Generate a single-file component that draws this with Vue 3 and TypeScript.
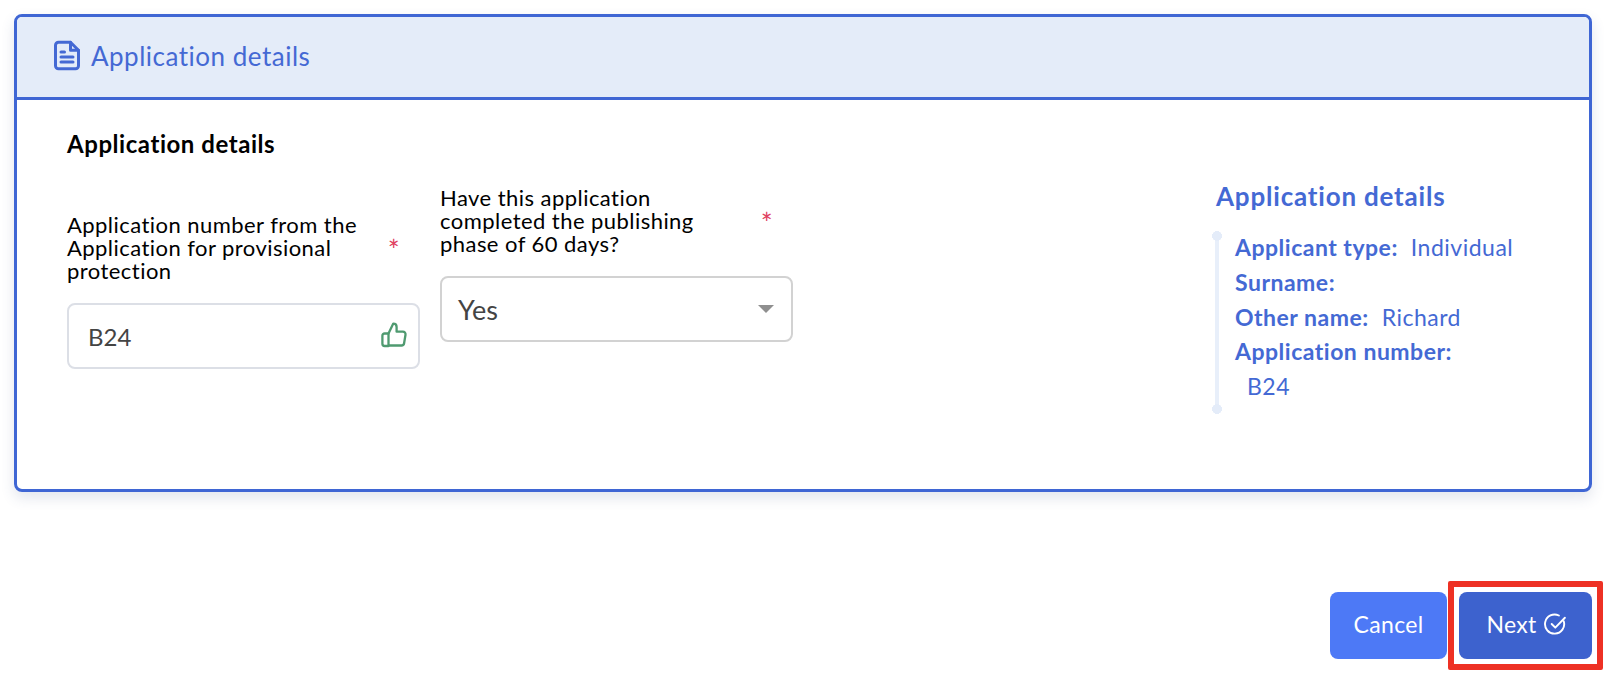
<template>
  <div class="page">
    <section class="card">
      <header class="card-head">
        <svg class="doc-icon" viewBox="0 0 26 30" fill="none" stroke="currentColor" stroke-width="3" stroke-linejoin="round" stroke-linecap="round">
          <path d="M16.5 1.8H4.5a3 3 0 0 0-3 3v20.4a3 3 0 0 0 3 3h17a3 3 0 0 0 3-3V9.8z" />
          <path d="M16.5 1.8v8h8" />
          <path d="M7 11.5h3.5M7 16.5h12M7 21.5h12" />
        </svg>
        <span>Application details</span>
      </header>

      <div class="card-body">
        <div class="form-side">
          <h3 class="form-title">Application details</h3>
          <div class="fields">
            <div class="field field-low">
              <label class="field-label">
                <span class="label-text">Application number from the Application for provisional protection</span>
                <span class="req">*</span>
              </label>
              <div class="control">
                <span class="value-input">B24</span>
                <svg class="thumb" viewBox="0 0 26 26" fill="none" stroke="currentColor" stroke-width="2.3" stroke-linejoin="round" stroke-linecap="round">
                  <path d="M7.5 11.5 12.3 1.6c1.9 0 3.3 1.4 3.3 3.3v4.8h6.3a2.6 2.6 0 0 1 2.6 3l-1.4 8.6a2.6 2.6 0 0 1-2.6 2.2H7.5z" />
                  <path d="M7.5 11.5H3.6a2.2 2.2 0 0 0-2.2 2.2v8.1a2.2 2.2 0 0 0 2.2 2.2h3.9" />
                </svg>
              </div>
            </div>

            <div class="field">
              <label class="field-label">
                <span class="label-text">Have this application completed the publishing phase of 60 days?</span>
                <span class="req">*</span>
              </label>
              <div class="control control-select">
                <span class="value-select">Yes</span>
                <span class="caret"></span>
              </div>
            </div>
          </div>
        </div>

        <aside class="summary">
          <h3 class="summary-title">Application details</h3>
          <ul class="summary-list">
            <li v-for="row in rows" :key="row.label">
              <strong>{{ row.label }}</strong>
              <span v-if="row.value" class="summary-value">{{ row.value }}</span>
            </li>
            <li class="summary-extra">B24</li>
          </ul>
        </aside>
      </div>
    </section>

    <footer class="actions">
      <button class="btn btn-cancel" type="button">Cancel</button>
      <button class="btn btn-next" type="button">
        Next
        <svg class="check" viewBox="0 0 24 24" fill="none" stroke="currentColor" stroke-width="2" stroke-linecap="round" stroke-linejoin="round">
          <path d="M20.6 8.6A10 10 0 1 1 15.5 2.6" />
          <path d="M8 11.5l3.8 3.8L21.8 5" />
        </svg>
      </button>
    </footer>
  </div>
</template>

<script setup lang="ts">
interface SummaryRow {
  label: string;
  value?: string;
}

const rows: SummaryRow[] = [
  { label: 'Applicant type:', value: 'Individual' },
  { label: 'Surname:' },
  { label: 'Other name:', value: 'Richard' },
  { label: 'Application number:' },
];
</script>

<style>
html,
body {
  margin: 0;
  background: #fff;
}
</style>

<style scoped>
.page {
  width: 1620px;
  height: 696px;
  padding: 14px 28px 0 14px;
  box-sizing: border-box;
  font-family: Lato, "Noto Sans", sans-serif;
  overflow: hidden;
}

.card {
  height: 478px;
  box-sizing: border-box;
  border: 3px solid #3f66d4;
  border-radius: 8px;
  box-shadow: 0 6px 14px rgba(60, 80, 130, 0.14);
  overflow: hidden;
}

.card-head {
  height: 83px;
  box-sizing: border-box;
  border-bottom: 3px solid #3f66d4;
  background: #e4ecf9;
  color: #4469d4;
  display: flex;
  align-items: center;
  gap: 11px;
  padding: 0 0 3px 37px;
  font-size: 26px;
  letter-spacing: 0.5px;
}

.doc-icon {
  width: 26px;
  height: 31px;
}

.card-body {
  display: flex;
  justify-content: space-between;
  padding: 29px 0 0 50px;
}

.form-title {
  margin: 0;
  font-size: 24px;
  letter-spacing: 0.55px;
  line-height: 30px;
  font-weight: 700;
  color: #000;
}

.fields {
  display: flex;
  gap: 20px;
  margin-top: 27px;
}

.field {
  width: 353px;
}

.field-low {
  margin-top: 27px;
}

.field-label {
  display: flex;
  align-items: center;
  justify-content: space-between;
  font-size: 22px;
  letter-spacing: 0.45px;
  line-height: 23px;
  color: #000;
}

.label-text {
  width: 297px;
}

.req {
  color: #e0405f;
  font-size: 28px;
  line-height: 20px;
  margin: 4px 20px 0 0;
}

.control {
  height: 66px;
  margin-top: 21px;
  box-sizing: border-box;
  border: 2px solid #dcdfe6;
  border-radius: 8px;
  display: flex;
  align-items: center;
  justify-content: space-between;
  padding: 0 11px 0 19px;
  color: #444;
}

.control-select {
  border-color: #d2d2d2;
  padding: 0 17px 0 16px;
}

.value-input {
  font-size: 24px;
}

.value-select {
  font-size: 27px;
}

.thumb {
  width: 26px;
  height: 26px;
  margin-bottom: 3px;
  color: #4f9a70;
}

.caret {
  width: 0;
  height: 0;
  border-left: 8px solid transparent;
  border-right: 8px solid transparent;
  border-top: 8px solid #8f8f8f;
}

.summary {
  width: 373px;
  color: #4469d4;
  padding-top: 52px;
}

.summary-title {
  margin: 0;
  font-size: 26px;
  letter-spacing: 0.8px;
  line-height: 30px;
  font-weight: 700;
}

.summary-list {
  position: relative;
  list-style: none;
  margin: 19px 0 0;
  padding: 0 0 6px 19px;
  font-size: 23px;
  letter-spacing: 0.5px;
  line-height: 34.8px;
}

.summary-list::before {
  content: "";
  position: absolute;
  left: -1px;
  top: 3px;
  bottom: -2px;
  width: 4px;
  background: #e8effa;
}

.summary-list::after {
  content: "";
  position: absolute;
  left: -4px;
  top: 1px;
  bottom: -4px;
  width: 10px;
  background:
    radial-gradient(circle 5px at 5px 5px, #e4ecf9 98%, transparent) top no-repeat,
    radial-gradient(circle 5px at 5px 5px, #e4ecf9 98%, transparent) bottom no-repeat;
  background-size: 10px 10px;
}

.summary-list strong {
  font-weight: 700;
}

.summary-value {
  margin-left: 13px;
}

.summary-extra {
  padding-left: 12px;
}

.actions {
  display: flex;
  justify-content: flex-end;
  gap: 12px;
  margin-top: 100px;
}

.btn {
  position: relative;
  height: 67px;
  border: 0;
  border-radius: 8px;
  padding: 0 0 3px;
  color: #fff;
  font-family: inherit;
  font-size: 23px;
  letter-spacing: 0.3px;
}

.btn-cancel {
  width: 117px;
  background: #4d79f6;
}

.btn-next {
  width: 133px;
  padding-left: 2px;
  background: #3d62ce;
  display: flex;
  align-items: center;
  justify-content: center;
  gap: 7px;
}

.btn-next::after {
  content: "";
  position: absolute;
  inset: -11px;
  border: 6px solid #ee3124;
  border-radius: 2px;
  pointer-events: none;
}

.check {
  width: 23px;
  height: 23px;
}
</style>
